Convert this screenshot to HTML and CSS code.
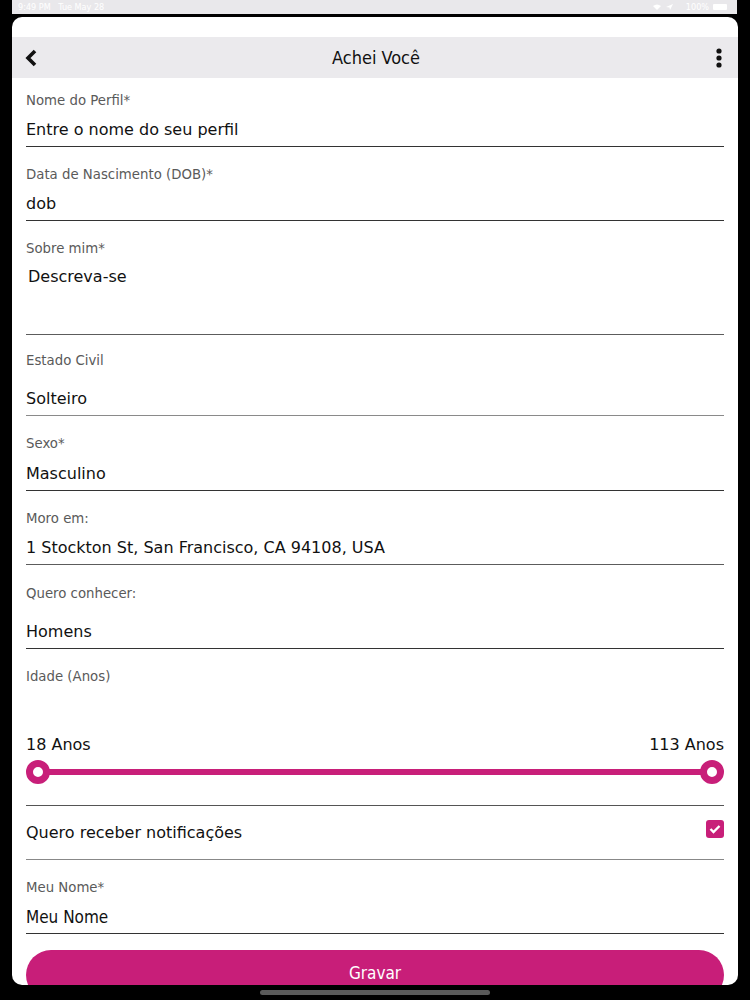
FILE: index.html
```html
<!DOCTYPE html>
<html lang="pt">
<head>
<meta charset="utf-8">
<link rel="stylesheet" href="styles.css">
</head>
<body>
<div class="screen">
  <div class="statusbar">
    <span class="sb-left">9:49 PM&nbsp;&nbsp;&nbsp;Tue May 28</span>
    <span class="sb-right">
      <svg width="30" height="8" viewBox="0 0 30 8"><path d="M1 3 Q5 0 9 3 L5 7 Z" fill="#fff"/><path d="M14 4 L21 1 L18 7 L17.5 4.5 Z" fill="#fff"/></svg>
      <span>100%</span>
      <span class="battery"></span>
    </span>
  </div>
  <div class="card">
    <div class="topspace"></div>
    <div class="header">
      <svg class="back" width="16" height="18" viewBox="0 0 16 18"><path d="M11 2 L4 9 L11 16" fill="none" stroke="#111" stroke-width="3.6" stroke-linejoin="miter"/></svg>
      <div class="title">Achei Você</div>
      <svg class="more" width="6" height="20" viewBox="0 0 6 20"><circle cx="3" cy="3" r="2.6" fill="#111"/><circle cx="3" cy="10" r="2.6" fill="#111"/><circle cx="3" cy="17" r="2.6" fill="#111"/></svg>
    </div>
    <div class="form">
      <div class="field first">
        <div class="label">Nome do Perfil*</div>
        <div class="value">Entre o nome do seu perfil</div>
      </div>
      <div class="field">
        <div class="label">Data de Nascimento (DOB)*</div>
        <div class="value">dob</div>
      </div>
      <div class="field textarea soft">
        <div class="label">Sobre mim*</div>
        <div class="value">Descreva-se</div>
      </div>
      <div class="field select light">
        <div class="label">Estado Civil</div>
        <div class="value">Solteiro</div>
      </div>
      <div class="field select-short">
        <div class="label">Sexo*</div>
        <div class="value">Masculino</div>
      </div>
      <div class="field soft">
        <div class="label">Moro em:</div>
        <div class="value">1 Stockton St, San Francisco, CA 94108, USA</div>
      </div>
      <div class="field select wide">
        <div class="label">Quero conhecer:</div>
        <div class="value">Homens</div>
      </div>
      <div class="range soft">
        <div class="label">Idade (Anos)</div>
        <div class="range-values"><span>18 Anos</span><span>113 Anos</span></div>
        <div class="slider">
          <span class="thumb"></span>
          <span class="track"></span>
          <span class="thumb"></span>
        </div>
      </div>
      <div class="notify light">
        <span>Quero receber notificações</span>
        <span class="check">
          <svg width="12" height="10" viewBox="0 0 12 10"><path d="M1.5 5 L4.5 8 L10.5 2" fill="none" stroke="#fff" stroke-width="2.4"/></svg>
        </span>
      </div>
      <div class="field">
        <div class="label">Meu Nome*</div>
        <div class="value narrow">Meu Nome</div>
      </div>
      <div class="button">Gravar</div>
    </div>
  </div>
  <div class="home"></div>
</div>
</body>
</html>
```
FILE: styles.css
```css
html, body {
  margin: 0;
  padding: 0;
  background: #000;
}
.screen {
  width: 750px;
  height: 1000px;
  overflow: hidden;
  background: #000;
  font-family: "DejaVu Sans", Verdana, sans-serif;
  color: #111;
}
.statusbar {
  margin: 0 13px 0 12px;
  height: 14px;
  background: #e9e8eb;
  display: flex;
  justify-content: space-between;
  align-items: center;
  padding: 0 10px 0 6px;
  font-size: 9px;
  color: #fff;
  font-stretch: condensed;
}
.sb-right {
  display: flex;
  align-items: center;
  gap: 4px;
}
.battery {
  width: 14px;
  height: 6px;
  background: #fff;
  border-radius: 1px;
}
.card {
  margin: 3px 12px 0;
  height: 968px;
  background: #fff;
  border-radius: 10px;
  overflow: hidden;
  display: flex;
  flex-direction: column;
}
.topspace {
  height: 20px;
  flex: none;
}
.header {
  flex: none;
  height: 41px;
  background: #ebeaed;
  display: grid;
  grid-template-columns: 1fr auto 1fr;
  align-items: center;
  padding: 0 16px 0 12px;
}
.back {
  margin-top: 1px;
  justify-self: start;
}
.title {
  font-family: "DejaVu Sans Condensed", "DejaVu Sans", sans-serif;
  font-stretch: condensed;
  font-size: 18px;
  color: #111;
  margin-left: 6px;
}
.more {
  justify-self: end;
}
.form {
  padding: 0 14px 0 14px;
  display: flex;
  flex-direction: column;
}
.label {
  font-size: 13.3px;
  line-height: 16px;
  color: #5a5a5a;
}
.value {
  font-size: 16px;
  line-height: 20px;
  color: #111;
  margin-top: 11px;
}
.narrow {
  font-family: "DejaVu Sans Condensed", "DejaVu Sans", sans-serif;
  font-stretch: condensed;
  font-size: 17px;
}
.field {
  padding-top: 20px;
  padding-bottom: 6px;
  border-bottom: 1.5px solid #333;
}
.field.first {
  padding-top: 15px;
}
.soft {
  border-bottom-color: #5c5c5c;
}
.light {
  border-bottom-color: #8a8a8a;
}
.textarea .value {
  margin-left: 2px;
  height: 61px;
  margin-top: 10px;
}
.select {
  padding-top: 18px;
}
.select.wide {
  padding-top: 21px;
}
.select .value {
  margin-top: 20px;
}
.select-short .value {
  margin-top: 12px;
}
.range {
  padding-top: 20px;
  padding-bottom: 20px;
  border-bottom: 1.5px solid #555;
}
.range-values {
  display: flex;
  justify-content: space-between;
  font-size: 16px;
  line-height: 20px;
  margin-top: 50px;
}
.slider {
  display: flex;
  align-items: center;
  margin-top: 4px;
  height: 26px;
}
.thumb {
  flex: none;
  width: 10px;
  height: 10px;
  border: 7px solid #c81f79;
  border-radius: 50%;
  background: #fff;
}
.track {
  flex: 1;
  height: 6px;
  background: #c81f79;
  margin: 0 -2px;
}
.notify {
  display: flex;
  justify-content: space-between;
  align-items: center;
  height: 53px;
  font-size: 16px;
  border-bottom: 1.5px solid #888;
}
.check {
  width: 18px;
  height: 18px;
  border-radius: 3px;
  background: #c81f79;
  display: flex;
  align-items: center;
  justify-content: center;
  margin-top: -8px;
}
.button {
  margin-top: 16px;
  height: 50px;
  border-radius: 25px;
  background: #c81e79;
  color: #fff;
  font-family: "DejaVu Sans Condensed", "DejaVu Sans", sans-serif;
  font-stretch: condensed;
  font-size: 17px;
  display: flex;
  align-items: center;
  justify-content: center;
  padding-bottom: 4px;
  box-sizing: border-box;
}
.home {
  width: 230px;
  height: 5px;
  border-radius: 3px;
  background: #5a5a5a;
  margin: 5px auto 0;
}
```
